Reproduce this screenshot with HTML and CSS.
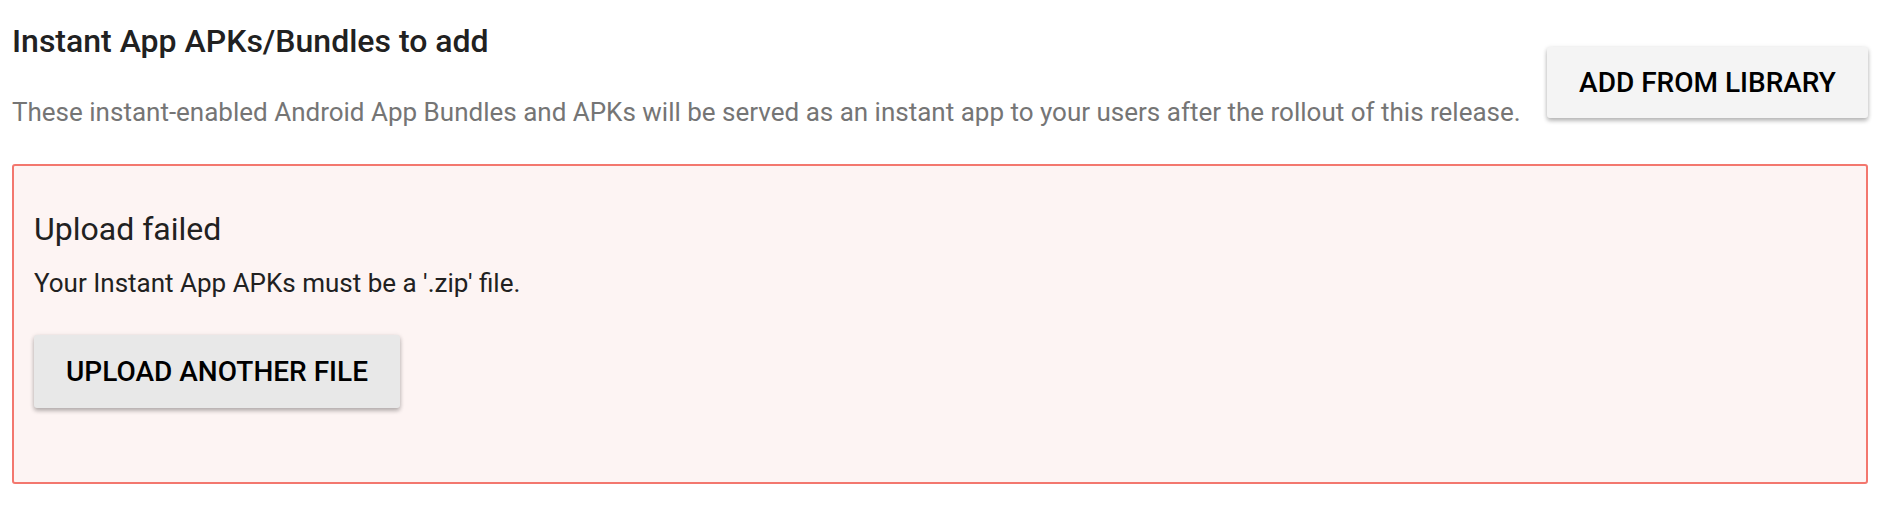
FILE: index.html
```html
<!DOCTYPE html>
<html>
<head>
<meta charset="utf-8">
<link rel="stylesheet" href="styles.css">
</head>
<body>
<section class="section">
  <div class="header">
    <div class="header-text">
      <h2 class="title">Instant App APKs/Bundles to add</h2>
      <p class="desc">These instant-enabled Android App Bundles and APKs will be served as an instant app to your users after the rollout of this release.</p>
    </div>
    <button class="btn btn-light">ADD FROM LIBRARY</button>
  </div>
  <div class="error-box">
    <h3 class="error-title">Upload failed</h3>
    <p class="error-msg">Your Instant App APKs must be a '.zip' file.</p>
    <button class="btn btn-grey">UPLOAD ANOTHER FILE</button>
  </div>
</section>
</body>
</html>
```
FILE: styles.css
```css
html, body {
  margin: 0;
  padding: 0;
  background: #ffffff;
}
body {
  font-family: Roboto, "Liberation Sans", sans-serif;
  color: #212121;
}
.section {
  padding: 0 18px 0 12px;
}
.header {
  display: flex;
  justify-content: space-between;
  align-items: flex-start;
}
.title {
  margin: 0;
  padding-top: 21px;
  font-size: 32px;
  line-height: 40px;
  font-weight: 500;
  color: #212121;
}
.desc {
  margin: 35px 0 0 0;
  font-size: 26px;
  line-height: 32px;
  color: #757575;
}
.btn {
  font-family: Roboto, "Liberation Sans", sans-serif;
  border: none;
  border-radius: 3px;
  font-weight: 500;
  font-size: 28px;
  color: #000;
  box-shadow: 0 3px 4px 0 rgba(0,0,0,0.22), 0 1px 5px 0 rgba(0,0,0,0.14);
  padding: 0;
  cursor: pointer;
}
.btn-light {
  flex: none;
  margin-top: 47px;
  width: 321px;
  height: 71px;
  background: #f4f4f4;
}
.btn-grey {
  display: block;
  width: 366px;
  height: 73px;
  background: #e8e8e8;
}
.error-box {
  margin-top: 36px;
  height: 320px;
  box-sizing: border-box;
  border: 2px solid #f3776e;
  border-radius: 3px;
  background: #fdf4f3;
  padding: 43px 20px 0 20px;
}
.error-title {
  margin: 0;
  font-size: 32px;
  line-height: 40px;
  font-weight: 400;
  color: #212121;
}
.error-msg {
  margin: 18px 0 36px 0;
  font-size: 26px;
  line-height: 32px;
  color: #212121;
}
```
